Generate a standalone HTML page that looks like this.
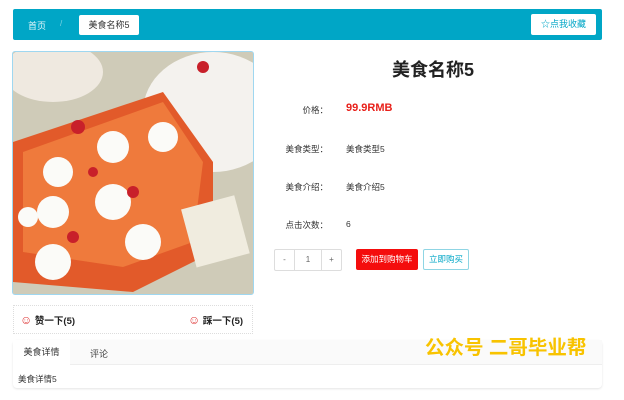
<!DOCTYPE html><html><head><meta charset="utf-8"><style>
body{margin:0;width:624px;height:400px;background:#fff;font-family:"Liberation Sans","Noto Sans CJK SC",sans-serif;position:relative;overflow:hidden;font-size:9px;color:#333}
.a{position:absolute}
</style></head><body>
<div class="a" style="left:13px;top:9px;width:589px;height:31px;background:#00a6c6;border-radius:2px"></div>
<div class="a" style="left:28px;top:19px;color:#e6f7fb;font-size:9px">首页</div>
<div class="a" style="left:60px;top:19px;color:#7fd3e3;font-size:8px">/</div>
<div class="a" style="left:79px;top:15px;width:60px;height:20px;background:#fff;border-radius:2px;line-height:20px;text-align:center;font-size:9px;color:#333">美食名称5</div>
<div class="a" style="left:531px;top:14px;width:65px;height:21px;background:#fff;border-radius:2px;line-height:21px;text-align:center;font-size:9px;color:#00a6c6">☆点我收藏</div>

<div class="a" style="left:12px;top:51px;width:240px;height:242px;border:1px solid #9fd7f0;border-radius:3px;overflow:hidden;background:#d8d4c4">
<svg width="240" height="242" viewBox="0 0 240 242">
<rect width="240" height="242" fill="#cfcbb8"/>
<ellipse cx="200" cy="60" rx="70" ry="60" fill="#f4f2ee"/>
<ellipse cx="40" cy="20" rx="50" ry="30" fill="#efe9e0"/>
<path d="M0 90 L150 40 L200 110 L200 200 L120 240 L0 230Z" fill="#e25a2a"/>
<path d="M10 100 L150 50 L190 110 L180 190 L110 215 L10 200Z" fill="#ef7a3c"/>
<rect x="175" y="150" width="55" height="60" fill="#f0ecdf" transform="rotate(-15 200 180)"/>
<g fill="#fbfbf8"><circle cx="45" cy="120" r="15"/><circle cx="100" cy="95" r="16"/><circle cx="150" cy="85" r="15"/><circle cx="40" cy="160" r="16"/><circle cx="100" cy="150" r="18"/><circle cx="40" cy="210" r="18"/><circle cx="130" cy="190" r="18"/><circle cx="15" cy="165" r="10"/></g>
<g fill="#c8202a"><circle cx="65" cy="75" r="7"/><circle cx="120" cy="140" r="6"/><circle cx="60" cy="185" r="6"/><circle cx="80" cy="120" r="5"/><circle cx="190" cy="15" r="6"/></g>
</svg></div>

<div class="a" style="left:13px;top:305px;width:238px;height:27px;border:1px dotted #ddd"></div>
<div class="a" style="left:20px;top:313px;font-size:9.5px;font-weight:bold;color:#222"><span style="color:#d33;font-size:12px;font-weight:normal">☺</span> 赞一下(5)</div>
<div class="a" style="left:188px;top:313px;font-size:9.5px;font-weight:bold;color:#222"><span style="color:#d33;font-size:12px;font-weight:normal">☺</span> 踩一下(5)</div>

<div class="a" style="left:13px;top:340px;width:589px;height:48px;border-radius:4px;box-shadow:0 1px 2px #e4e4e4;background:#fff"></div>
<div class="a" style="left:13px;top:340px;width:589px;height:24px;background:#fafafa;border-bottom:1px solid #eee"></div>
<div class="a" style="left:13px;top:340px;width:57px;height:25px;background:#fff;text-align:center;line-height:24px;font-size:9px">美食详情</div>
<div class="a" style="left:90px;top:347px;font-size:9px;color:#444">评论</div>
<div class="a" style="left:18px;top:373px;font-size:8.5px">美食详情5</div>
<div class="a" style="left:425px;top:331px;font-size:19.5px;font-weight:bold;color:#f8c300">公众号 二哥毕业帮</div>

<div class="a" style="left:333px;top:56px;width:200px;text-align:center;font-size:18px;font-weight:bold;color:#222">美食名称5</div>
<div class="a" style="left:268px;top:104px;width:60px;text-align:right;font-size:8.5px">价格：</div>
<div class="a" style="left:346px;top:102px;font-size:11px;font-weight:bold;color:#e8201a">99.9RMB</div>
<div class="a" style="left:268px;top:143px;width:60px;text-align:right;font-size:8.5px">美食类型：</div>
<div class="a" style="left:346px;top:143px;font-size:8.5px">美食类型5</div>
<div class="a" style="left:268px;top:181px;width:60px;text-align:right;font-size:8.5px">美食介绍：</div>
<div class="a" style="left:346px;top:181px;font-size:8.5px">美食介绍5</div>
<div class="a" style="left:268px;top:219px;width:60px;text-align:right;font-size:8.5px">点击次数：</div>
<div class="a" style="left:346px;top:219px;font-size:8.5px">6</div>

<div class="a" style="left:274px;top:249px;width:66px;height:20px;border:1px solid #ddd;border-radius:2px;display:flex;font-size:8px;color:#666;line-height:20px;text-align:center">
<div style="width:19px;border-right:1px solid #ddd">-</div><div style="flex:1;border-right:1px solid #ddd">1</div><div style="width:19px">+</div></div>
<div class="a" style="left:356px;top:249px;width:62px;height:21px;background:#f40d0d;border-radius:2px;color:#fff;font-size:8.5px;line-height:21px;text-align:center">添加到购物车</div>
<div class="a" style="left:423px;top:249px;width:44px;height:19px;border:1px solid #8fd5e4;border-radius:2px;color:#00a6c6;font-size:8.5px;line-height:19px;text-align:center">立即购买</div>
</body></html>
